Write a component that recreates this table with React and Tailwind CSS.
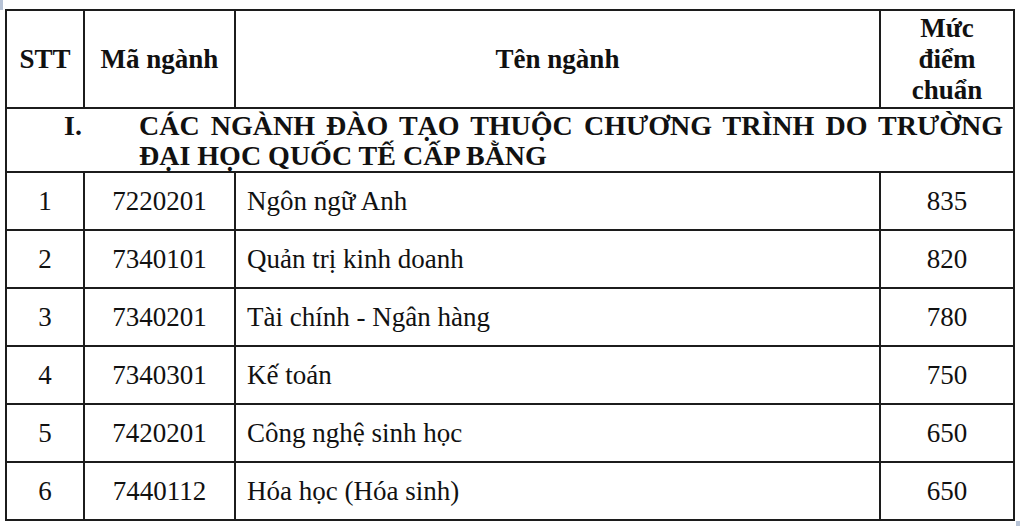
import React from "react";

const rows = [
  { stt: "1", code: "7220201", name: "Ngôn ngữ Anh", score: "835" },
  { stt: "2", code: "7340101", name: "Quản trị kinh doanh", score: "820" },
  { stt: "3", code: "7340201", name: "Tài chính - Ngân hàng", score: "780" },
  { stt: "4", code: "7340301", name: "Kế toán", score: "750" },
  { stt: "5", code: "7420201", name: "Công nghệ sinh học", score: "650" },
  { stt: "6", code: "7440112", name: "Hóa học (Hóa sinh)", score: "650" },
];

const cell = "border-2 border-[#1c1c1c] p-0";

const App = () => {
  return (
    <div className="relative w-[1020px] h-[526px] bg-white overflow-hidden font-['Liberation_Serif','Times_New_Roman',serif] text-[#111]">
      <div className="absolute left-0 top-0 w-[3px] h-[10px] bg-[#b7c3d6]" />
      <div className="absolute right-0 bottom-0 w-[4px] h-[5px] bg-[#b7c3d6]" />
      <div className="pt-[9px] pl-[5px]">
        <table className="border-collapse table-fixed w-[1008px]">
          <colgroup>
            <col className="w-[78px]" />
            <col className="w-[151px]" />
            <col className="w-[645px]" />
            <col className="w-[134px]" />
          </colgroup>
          <thead>
            <tr className="h-[98px] font-bold text-[27px]">
              <th className={`${cell} text-center`}>STT</th>
              <th className={`${cell} text-center`}>Mã ngành</th>
              <th className={`${cell} text-center`}>Tên ngành</th>
              <th className={`${cell} text-center leading-[31px]`}>
                Mức
                <br />
                điểm
                <br />
                chuẩn
              </th>
            </tr>
          </thead>
          <tbody>
            <tr className="h-[64px]">
              <td colSpan={4} className={`${cell} align-top`}>
                <div className="flex font-bold text-[28px] leading-[30px] pt-[2px]">
                  <div className="w-[132px] shrink-0 pl-[57px]">I.</div>
                  <div className="flex-1 pr-[10px]">
                    <div className="text-justify [text-align-last:justify]">
                      CÁC NGÀNH ĐÀO TẠO THUỘC CHƯƠNG TRÌNH DO TRƯỜNG
                    </div>
                    <div>ĐẠI HỌC QUỐC TẾ CẤP BẰNG</div>
                  </div>
                </div>
              </td>
            </tr>
            {rows.map((r) => (
              <tr key={r.stt} className="h-[58px] text-[27px]">
                <td className={`${cell} text-center`}>{r.stt}</td>
                <td className={`${cell} text-center`}>{r.code}</td>
                <td className={`${cell} pl-[11px]`}>{r.name}</td>
                <td className={`${cell} text-center`}>{r.score}</td>
              </tr>
            ))}
          </tbody>
        </table>
      </div>
    </div>
  );
};

export default App;
